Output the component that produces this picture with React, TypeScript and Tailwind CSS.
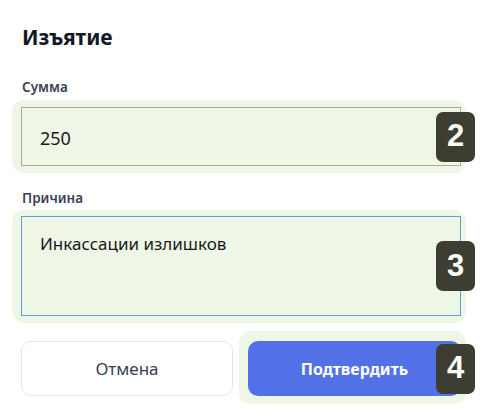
import React from "react";

function Badge({ n }: { n: string }) {
  return (
    <div className="absolute right-[-14px] top-1/2 -translate-y-1/2 w-[39px] h-[50px] rounded-[7px] bg-[#3d3d31] flex items-center justify-center text-white text-[31px] font-bold z-10 [font-family:'Liberation_Sans',Arial,sans-serif]">
      {n}
    </div>
  );
}

export default function App() {
  return (
    <div className="w-[480px] h-[419px] bg-white [font-family:'Noto_Sans',sans-serif] pl-[21px] pr-[19px] pt-[22px] flex flex-col">
      <h1 className="text-[21px] leading-[30px] font-bold text-[#111827] pl-[1px]">Изъятие</h1>

      <div className="mt-[25px] text-[13.5px] leading-[20px] font-semibold text-[#374151] pl-[1px]">Сумма</div>
      <div className="relative mt-[10px]">
        <div className="absolute left-[-9px] right-[-5px] top-[-7px] bottom-[-7px] rounded-[12px] bg-[#eef7e6]" />
        <div className="relative h-[59px] border border-[#a4b09c] flex items-center pl-[18px] pt-[3px] text-[18px] text-[#1a1a1a]">
          250
        </div>
        <Badge n="2" />
      </div>

      <div className="mt-[22px] text-[13.5px] leading-[20px] font-semibold text-[#374151] pl-[1px]">Причина</div>
      <div className="relative mt-[8px]">
        <div className="absolute left-[-9px] right-[-5px] top-[-6px] bottom-[-7px] rounded-[12px] bg-[#eef7e6]" />
        <div className="relative h-[100px] border border-[#5b9fd6] pl-[18px] pt-[14px] text-[17px] leading-[26px] text-[#1a1a1a]">
          Инкассации излишков
        </div>
        <Badge n="3" />
      </div>

      <div className="mt-[25px] flex gap-[15px]">
        <button className="w-[212px] h-[55px] rounded-[10px] border border-[#e3e5ec] bg-white text-[17px] text-[#374151]">
          Отмена
        </button>
        <div className="relative flex-1">
          <div className="absolute left-[-9px] right-[-5px] top-[-10px] bottom-[-8px] rounded-[12px] bg-[#eef7e6]" />
          <button className="relative w-full h-[55px] rounded-[10px] bg-[#5271e6] text-white text-[16px] font-bold">
            Подтвердить
          </button>
          <Badge n="4" />
        </div>
      </div>
    </div>
  );
}
